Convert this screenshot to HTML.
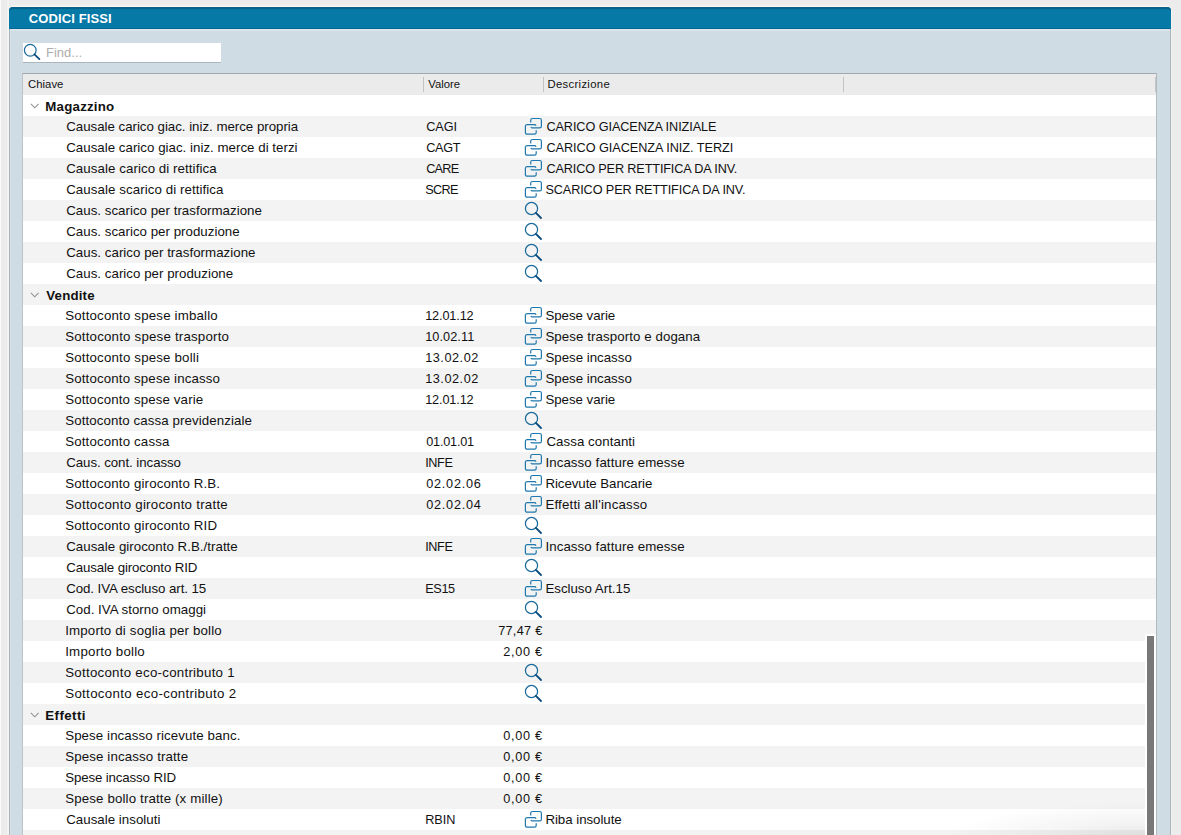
<!DOCTYPE html>
<html><head><meta charset="utf-8">
<style>
html,body{margin:0;padding:0;}
body{width:1181px;height:835px;overflow:hidden;background:#ececec;position:relative;font-family:"Liberation Sans",sans-serif;}
.t{position:absolute;white-space:nowrap;line-height:21px;}
.lite{position:absolute;left:0;top:0;width:1px;height:835px;background:#fafafa;}
.lite2{position:absolute;left:7px;top:0;width:2px;height:835px;background:#f2f2f2;}
.panel{position:absolute;left:9px;top:7px;width:1162px;height:840px;background:#d0dce3;border-radius:4px 4px 0 0;box-shadow:0 -1px 0 0.5px #fbf5f0;}
.pedge{position:absolute;left:0;top:22px;width:1px;height:820px;background:#a8b5bc;}
.pedge2{position:absolute;left:1px;top:22px;width:1px;height:820px;background:#d6e1e7;}
.pedger{position:absolute;right:0;top:22px;width:1px;height:820px;background:#a8b5bc;}
.hdr{position:absolute;left:0;top:0;width:100%;height:22px;background:#0779a7;border-radius:4px 4px 0 0;box-shadow:inset 0 2px 0 #05628b, inset 0 -1px 0 #046897;}
.hline{position:absolute;left:0;top:22px;width:100%;height:2px;background:#dce4e9;}
.search{position:absolute;left:23px;top:43px;width:198px;height:19px;background:#fff;box-shadow:0 1px 0 #aab6bd;}
.search .ic{position:absolute;left:0px;top:0px;}
.table{position:absolute;left:22px;top:73px;width:1135px;height:800px;background:#fff;border-top:1px solid #a2a9ad;border-left:1px solid #bcc4c9;border-right:1px solid #b3babe;box-sizing:border-box;overflow:hidden;}
.th{position:absolute;left:0;top:0;width:100%;height:21px;background:#ebebeb;}
.sep{position:absolute;top:3px;width:1px;height:15px;background:#c2c2c2;}
.rows{position:absolute;left:-23px;top:-74px;width:1181px;height:900px;}
.row{position:absolute;left:23px;width:1133px;height:21px;background:#fff;font-size:13.3px;color:#111;}
.row.alt{background:#f3f3f3;}
.row span{position:absolute;white-space:nowrap;line-height:21px;margin-left:-23px;}
.chev{position:absolute;left:7px;top:7.6px;}
.ib{position:absolute;left:499px;top:0;width:22px;height:21px;}
.ic{position:absolute;left:0;top:0;}
.strack{position:absolute;left:1122px;top:560px;width:11px;height:300px;background:#fff;}
.scroll{position:absolute;left:1124px;top:562px;width:7px;height:300px;background:#787878;}
.corner{position:absolute;left:900px;top:720px;width:222px;height:60px;background:radial-gradient(ellipse 200px 36px at 222px 44px, rgba(0,0,0,0.09), rgba(0,0,0,0.04) 50%, rgba(0,0,0,0) 100%);}
</style></head><body>
<div class="lite"></div><div class="lite2"></div>
<div class="panel">
  <div class="hdr"></div>
  <div class="hline"></div>
  <div class="pedge"></div><div class="pedge2"></div><div class="pedger"></div>
  <span class="t" style="left:28.70px;top:1.00px;letter-spacing:0.118px;font-size:13px;font-weight:bold;color:#fff;margin-left:-9px">CODICI FISSI</span>
</div>
<div class="search"><svg class="ic" width="22" height="21" viewBox="0 0 22 21"><circle cx="7.25" cy="7.25" r="5.85" fill="none" stroke="#1a6b9c" stroke-width="1.2"/><path d="M11.4 11.4 L16.4 16.2" stroke="#0a4a7c" stroke-width="1.7" stroke-linecap="round"/></svg><span class="t" style="left:46.00px;top:-0.80px;letter-spacing:0.000px;font-size:13px;color:#adadad;margin-left:-23px">Find...</span></div>
<div class="table">
  <div class="th">
    <span class="t" style="left:28.10px;top:-0.10px;letter-spacing:0.020px;font-size:11.3px;color:#111;margin-left:-23px">Chiave</span>
    <div class="sep" style="left:400px"></div><span class="t" style="left:428.30px;top:-0.10px;letter-spacing:0.000px;font-size:11.3px;color:#111;margin-left:-23px">Valore</span>
    <div class="sep" style="left:520px"></div><span class="t" style="left:547.40px;top:-0.10px;letter-spacing:0.330px;font-size:11.3px;color:#111;margin-left:-23px">Descrizione</span>
    <div class="sep" style="left:820px"></div>
    <div class="sep" style="left:1132px;background:#c6c6c6"></div>
  </div>
  <div class="rows">
<div class="row" style="top:95px"><svg class="chev" width="12" height="8" viewBox="0 0 12 8"><path d="M0.9 0.9 L4.75 4.75 L8.6 0.9" fill="none" stroke="#909090" stroke-width="1.05"/></svg><span style="left:45.30px;top:0.50px;letter-spacing:0.213px;font-size:13.3px;font-weight:bold;font-weight:bold">Magazzino</span></div>
<div class="row alt" style="top:116px"><span style="left:66.20px;top:0.30px;letter-spacing:-0.021px;font-size:13.3px;">Causale carico giac. iniz. merce propria</span><span style="left:426.20px;top:1.30px;letter-spacing:-0.067px;font-size:12.7px;">CAGI</span><b class="ib"><svg class="ic" width="22" height="21" viewBox="0 0 22 21"><path d="M8.7 6.45 V4.2 A1.7 1.7 0 0 1 10.4 2.5 H17.7 A1.7 1.7 0 0 1 19.4 4.2 V10.15 A1.7 1.7 0 0 1 17.7 11.85 H10.4 A1.7 1.7 0 0 1 8.85 10.9" fill="none" stroke="#1f78ad" stroke-width="1.2"/><path d="M14.2 14.2 V16.5 A1.7 1.7 0 0 1 12.5 18.2 H5.1 A1.7 1.7 0 0 1 3.4 16.5 V10.4 A1.7 1.7 0 0 1 5.1 8.7 H12.5 A1.7 1.7 0 0 1 14.05 9.65" fill="none" stroke="#1f78ad" stroke-width="1.2"/></svg></b><span style="left:546.40px;top:1.30px;letter-spacing:-0.083px;font-size:12.7px;">CARICO GIACENZA INIZIALE</span></div>
<div class="row" style="top:137px"><span style="left:66.20px;top:0.30px;letter-spacing:0.020px;font-size:13.3px;">Causale carico giac. iniz. merce di terzi</span><span style="left:426.20px;top:1.30px;letter-spacing:-0.300px;font-size:12.7px;">CAGT</span><b class="ib"><svg class="ic" width="22" height="21" viewBox="0 0 22 21"><path d="M8.7 6.45 V4.2 A1.7 1.7 0 0 1 10.4 2.5 H17.7 A1.7 1.7 0 0 1 19.4 4.2 V10.15 A1.7 1.7 0 0 1 17.7 11.85 H10.4 A1.7 1.7 0 0 1 8.85 10.9" fill="none" stroke="#1f78ad" stroke-width="1.2"/><path d="M14.2 14.2 V16.5 A1.7 1.7 0 0 1 12.5 18.2 H5.1 A1.7 1.7 0 0 1 3.4 16.5 V10.4 A1.7 1.7 0 0 1 5.1 8.7 H12.5 A1.7 1.7 0 0 1 14.05 9.65" fill="none" stroke="#1f78ad" stroke-width="1.2"/></svg></b><span style="left:546.40px;top:1.30px;letter-spacing:-0.042px;font-size:12.7px;">CARICO GIACENZA INIZ. TERZI</span></div>
<div class="row alt" style="top:158px"><span style="left:66.20px;top:0.30px;letter-spacing:0.069px;font-size:13.3px;">Causale carico di rettifica</span><span style="left:426.20px;top:1.30px;letter-spacing:-0.767px;font-size:12.7px;">CARE</span><b class="ib"><svg class="ic" width="22" height="21" viewBox="0 0 22 21"><path d="M8.7 6.45 V4.2 A1.7 1.7 0 0 1 10.4 2.5 H17.7 A1.7 1.7 0 0 1 19.4 4.2 V10.15 A1.7 1.7 0 0 1 17.7 11.85 H10.4 A1.7 1.7 0 0 1 8.85 10.9" fill="none" stroke="#1f78ad" stroke-width="1.2"/><path d="M14.2 14.2 V16.5 A1.7 1.7 0 0 1 12.5 18.2 H5.1 A1.7 1.7 0 0 1 3.4 16.5 V10.4 A1.7 1.7 0 0 1 5.1 8.7 H12.5 A1.7 1.7 0 0 1 14.05 9.65" fill="none" stroke="#1f78ad" stroke-width="1.2"/></svg></b><span style="left:546.40px;top:1.30px;letter-spacing:-0.141px;font-size:12.7px;">CARICO PER RETTIFICA DA INV.</span></div>
<div class="row" style="top:179px"><span style="left:66.20px;top:0.30px;letter-spacing:0.078px;font-size:13.3px;">Causale scarico di rettifica</span><span style="left:425.20px;top:1.30px;letter-spacing:-0.633px;font-size:12.7px;">SCRE</span><b class="ib"><svg class="ic" width="22" height="21" viewBox="0 0 22 21"><path d="M8.7 6.45 V4.2 A1.7 1.7 0 0 1 10.4 2.5 H17.7 A1.7 1.7 0 0 1 19.4 4.2 V10.15 A1.7 1.7 0 0 1 17.7 11.85 H10.4 A1.7 1.7 0 0 1 8.85 10.9" fill="none" stroke="#1f78ad" stroke-width="1.2"/><path d="M14.2 14.2 V16.5 A1.7 1.7 0 0 1 12.5 18.2 H5.1 A1.7 1.7 0 0 1 3.4 16.5 V10.4 A1.7 1.7 0 0 1 5.1 8.7 H12.5 A1.7 1.7 0 0 1 14.05 9.65" fill="none" stroke="#1f78ad" stroke-width="1.2"/></svg></b><span style="left:545.40px;top:1.30px;letter-spacing:-0.111px;font-size:12.7px;">SCARICO PER RETTIFICA DA INV.</span></div>
<div class="row alt" style="top:200px"><span style="left:66.20px;top:0.30px;letter-spacing:0.019px;font-size:13.3px;">Caus. scarico per trasformazione</span><b class="ib"><svg class="ic" width="22" height="21" viewBox="0 0 22 21"><circle cx="9.5" cy="8.5" r="6.1" fill="none" stroke="#1a6b9c" stroke-width="1.25"/><path d="M13.9 12.9 L19.0 18.0" stroke="#0a4a7c" stroke-width="1.8" stroke-linecap="round"/></svg></b></div>
<div class="row" style="top:221px"><span style="left:66.20px;top:0.30px;letter-spacing:0.019px;font-size:13.3px;">Caus. scarico per produzione</span><b class="ib"><svg class="ic" width="22" height="21" viewBox="0 0 22 21"><circle cx="9.5" cy="8.5" r="6.1" fill="none" stroke="#1a6b9c" stroke-width="1.25"/><path d="M13.9 12.9 L19.0 18.0" stroke="#0a4a7c" stroke-width="1.8" stroke-linecap="round"/></svg></b></div>
<div class="row alt" style="top:242px"><span style="left:66.20px;top:0.30px;letter-spacing:0.027px;font-size:13.3px;">Caus. carico per trasformazione</span><b class="ib"><svg class="ic" width="22" height="21" viewBox="0 0 22 21"><circle cx="9.5" cy="8.5" r="6.1" fill="none" stroke="#1a6b9c" stroke-width="1.25"/><path d="M13.9 12.9 L19.0 18.0" stroke="#0a4a7c" stroke-width="1.8" stroke-linecap="round"/></svg></b></div>
<div class="row" style="top:263px"><span style="left:66.20px;top:0.30px;letter-spacing:0.027px;font-size:13.3px;">Caus. carico per produzione</span><b class="ib"><svg class="ic" width="22" height="21" viewBox="0 0 22 21"><circle cx="9.5" cy="8.5" r="6.1" fill="none" stroke="#1a6b9c" stroke-width="1.25"/><path d="M13.9 12.9 L19.0 18.0" stroke="#0a4a7c" stroke-width="1.8" stroke-linecap="round"/></svg></b></div>
<div class="row alt" style="top:284px"><svg class="chev" width="12" height="8" viewBox="0 0 12 8"><path d="M0.9 0.9 L4.75 4.75 L8.6 0.9" fill="none" stroke="#909090" stroke-width="1.05"/></svg><span style="left:46.30px;top:0.50px;letter-spacing:0.167px;font-size:13.3px;font-weight:bold;font-weight:bold">Vendite</span></div>
<div class="row" style="top:305px"><span style="left:65.20px;top:0.30px;letter-spacing:0.174px;font-size:13.3px;">Sottoconto spese imballo</span><span style="left:425.20px;top:1.30px;letter-spacing:-0.129px;font-size:12.7px;">12.01.12</span><b class="ib"><svg class="ic" width="22" height="21" viewBox="0 0 22 21"><path d="M8.7 6.45 V4.2 A1.7 1.7 0 0 1 10.4 2.5 H17.7 A1.7 1.7 0 0 1 19.4 4.2 V10.15 A1.7 1.7 0 0 1 17.7 11.85 H10.4 A1.7 1.7 0 0 1 8.85 10.9" fill="none" stroke="#1f78ad" stroke-width="1.2"/><path d="M14.2 14.2 V16.5 A1.7 1.7 0 0 1 12.5 18.2 H5.1 A1.7 1.7 0 0 1 3.4 16.5 V10.4 A1.7 1.7 0 0 1 5.1 8.7 H12.5 A1.7 1.7 0 0 1 14.05 9.65" fill="none" stroke="#1f78ad" stroke-width="1.2"/></svg></b><span style="left:545.40px;top:0.30px;letter-spacing:-0.040px;font-size:13.3px;">Spese varie</span></div>
<div class="row alt" style="top:326px"><span style="left:65.20px;top:0.30px;letter-spacing:0.192px;font-size:13.3px;">Sottoconto spese trasporto</span><span style="left:425.20px;top:1.30px;letter-spacing:0.086px;font-size:12.7px;">10.02.11</span><b class="ib"><svg class="ic" width="22" height="21" viewBox="0 0 22 21"><path d="M8.7 6.45 V4.2 A1.7 1.7 0 0 1 10.4 2.5 H17.7 A1.7 1.7 0 0 1 19.4 4.2 V10.15 A1.7 1.7 0 0 1 17.7 11.85 H10.4 A1.7 1.7 0 0 1 8.85 10.9" fill="none" stroke="#1f78ad" stroke-width="1.2"/><path d="M14.2 14.2 V16.5 A1.7 1.7 0 0 1 12.5 18.2 H5.1 A1.7 1.7 0 0 1 3.4 16.5 V10.4 A1.7 1.7 0 0 1 5.1 8.7 H12.5 A1.7 1.7 0 0 1 14.05 9.65" fill="none" stroke="#1f78ad" stroke-width="1.2"/></svg></b><span style="left:545.40px;top:0.30px;letter-spacing:0.078px;font-size:13.3px;">Spese trasporto e dogana</span></div>
<div class="row" style="top:347px"><span style="left:65.20px;top:0.30px;letter-spacing:0.171px;font-size:13.3px;">Sottoconto spese bolli</span><span style="left:425.20px;top:1.30px;letter-spacing:0.529px;font-size:12.7px;">13.02.02</span><b class="ib"><svg class="ic" width="22" height="21" viewBox="0 0 22 21"><path d="M8.7 6.45 V4.2 A1.7 1.7 0 0 1 10.4 2.5 H17.7 A1.7 1.7 0 0 1 19.4 4.2 V10.15 A1.7 1.7 0 0 1 17.7 11.85 H10.4 A1.7 1.7 0 0 1 8.85 10.9" fill="none" stroke="#1f78ad" stroke-width="1.2"/><path d="M14.2 14.2 V16.5 A1.7 1.7 0 0 1 12.5 18.2 H5.1 A1.7 1.7 0 0 1 3.4 16.5 V10.4 A1.7 1.7 0 0 1 5.1 8.7 H12.5 A1.7 1.7 0 0 1 14.05 9.65" fill="none" stroke="#1f78ad" stroke-width="1.2"/></svg></b><span style="left:545.40px;top:0.30px;letter-spacing:-0.008px;font-size:13.3px;">Spese incasso</span></div>
<div class="row alt" style="top:368px"><span style="left:65.20px;top:0.30px;letter-spacing:0.143px;font-size:13.3px;">Sottoconto spese incasso</span><span style="left:425.20px;top:1.30px;letter-spacing:0.529px;font-size:12.7px;">13.02.02</span><b class="ib"><svg class="ic" width="22" height="21" viewBox="0 0 22 21"><path d="M8.7 6.45 V4.2 A1.7 1.7 0 0 1 10.4 2.5 H17.7 A1.7 1.7 0 0 1 19.4 4.2 V10.15 A1.7 1.7 0 0 1 17.7 11.85 H10.4 A1.7 1.7 0 0 1 8.85 10.9" fill="none" stroke="#1f78ad" stroke-width="1.2"/><path d="M14.2 14.2 V16.5 A1.7 1.7 0 0 1 12.5 18.2 H5.1 A1.7 1.7 0 0 1 3.4 16.5 V10.4 A1.7 1.7 0 0 1 5.1 8.7 H12.5 A1.7 1.7 0 0 1 14.05 9.65" fill="none" stroke="#1f78ad" stroke-width="1.2"/></svg></b><span style="left:545.40px;top:0.30px;letter-spacing:-0.008px;font-size:13.3px;">Spese incasso</span></div>
<div class="row" style="top:389px"><span style="left:65.20px;top:0.30px;letter-spacing:0.129px;font-size:13.3px;">Sottoconto spese varie</span><span style="left:425.20px;top:1.30px;letter-spacing:-0.129px;font-size:12.7px;">12.01.12</span><b class="ib"><svg class="ic" width="22" height="21" viewBox="0 0 22 21"><path d="M8.7 6.45 V4.2 A1.7 1.7 0 0 1 10.4 2.5 H17.7 A1.7 1.7 0 0 1 19.4 4.2 V10.15 A1.7 1.7 0 0 1 17.7 11.85 H10.4 A1.7 1.7 0 0 1 8.85 10.9" fill="none" stroke="#1f78ad" stroke-width="1.2"/><path d="M14.2 14.2 V16.5 A1.7 1.7 0 0 1 12.5 18.2 H5.1 A1.7 1.7 0 0 1 3.4 16.5 V10.4 A1.7 1.7 0 0 1 5.1 8.7 H12.5 A1.7 1.7 0 0 1 14.05 9.65" fill="none" stroke="#1f78ad" stroke-width="1.2"/></svg></b><span style="left:545.40px;top:0.30px;letter-spacing:-0.040px;font-size:13.3px;">Spese varie</span></div>
<div class="row alt" style="top:410px"><span style="left:65.20px;top:0.30px;letter-spacing:0.093px;font-size:13.3px;">Sottoconto cassa previdenziale</span><b class="ib"><svg class="ic" width="22" height="21" viewBox="0 0 22 21"><circle cx="9.5" cy="8.5" r="6.1" fill="none" stroke="#1a6b9c" stroke-width="1.25"/><path d="M13.9 12.9 L19.0 18.0" stroke="#0a4a7c" stroke-width="1.8" stroke-linecap="round"/></svg></b></div>
<div class="row" style="top:431px"><span style="left:65.20px;top:0.30px;letter-spacing:0.147px;font-size:13.3px;">Sottoconto cassa</span><span style="left:426.20px;top:1.30px;letter-spacing:-0.200px;font-size:12.7px;">01.01.01</span><b class="ib"><svg class="ic" width="22" height="21" viewBox="0 0 22 21"><path d="M8.7 6.45 V4.2 A1.7 1.7 0 0 1 10.4 2.5 H17.7 A1.7 1.7 0 0 1 19.4 4.2 V10.15 A1.7 1.7 0 0 1 17.7 11.85 H10.4 A1.7 1.7 0 0 1 8.85 10.9" fill="none" stroke="#1f78ad" stroke-width="1.2"/><path d="M14.2 14.2 V16.5 A1.7 1.7 0 0 1 12.5 18.2 H5.1 A1.7 1.7 0 0 1 3.4 16.5 V10.4 A1.7 1.7 0 0 1 5.1 8.7 H12.5 A1.7 1.7 0 0 1 14.05 9.65" fill="none" stroke="#1f78ad" stroke-width="1.2"/></svg></b><span style="left:546.40px;top:0.30px;letter-spacing:0.054px;font-size:13.3px;">Cassa contanti</span></div>
<div class="row alt" style="top:452px"><span style="left:66.20px;top:0.30px;letter-spacing:-0.067px;font-size:13.3px;">Caus. cont. incasso</span><span style="left:425.20px;top:1.30px;letter-spacing:-0.400px;font-size:12.7px;">INFE</span><b class="ib"><svg class="ic" width="22" height="21" viewBox="0 0 22 21"><path d="M8.7 6.45 V4.2 A1.7 1.7 0 0 1 10.4 2.5 H17.7 A1.7 1.7 0 0 1 19.4 4.2 V10.15 A1.7 1.7 0 0 1 17.7 11.85 H10.4 A1.7 1.7 0 0 1 8.85 10.9" fill="none" stroke="#1f78ad" stroke-width="1.2"/><path d="M14.2 14.2 V16.5 A1.7 1.7 0 0 1 12.5 18.2 H5.1 A1.7 1.7 0 0 1 3.4 16.5 V10.4 A1.7 1.7 0 0 1 5.1 8.7 H12.5 A1.7 1.7 0 0 1 14.05 9.65" fill="none" stroke="#1f78ad" stroke-width="1.2"/></svg></b><span style="left:545.40px;top:0.30px;letter-spacing:0.086px;font-size:13.3px;">Incasso fatture emesse</span></div>
<div class="row" style="top:473px"><span style="left:65.20px;top:0.30px;letter-spacing:0.138px;font-size:13.3px;">Sottoconto giroconto R.B.</span><span style="left:426.20px;top:1.30px;letter-spacing:0.757px;font-size:12.7px;">02.02.06</span><b class="ib"><svg class="ic" width="22" height="21" viewBox="0 0 22 21"><path d="M8.7 6.45 V4.2 A1.7 1.7 0 0 1 10.4 2.5 H17.7 A1.7 1.7 0 0 1 19.4 4.2 V10.15 A1.7 1.7 0 0 1 17.7 11.85 H10.4 A1.7 1.7 0 0 1 8.85 10.9" fill="none" stroke="#1f78ad" stroke-width="1.2"/><path d="M14.2 14.2 V16.5 A1.7 1.7 0 0 1 12.5 18.2 H5.1 A1.7 1.7 0 0 1 3.4 16.5 V10.4 A1.7 1.7 0 0 1 5.1 8.7 H12.5 A1.7 1.7 0 0 1 14.05 9.65" fill="none" stroke="#1f78ad" stroke-width="1.2"/></svg></b><span style="left:545.40px;top:0.30px;letter-spacing:-0.062px;font-size:13.3px;">Ricevute Bancarie</span></div>
<div class="row alt" style="top:494px"><span style="left:65.20px;top:0.30px;letter-spacing:0.254px;font-size:13.3px;">Sottoconto giroconto tratte</span><span style="left:426.20px;top:1.30px;letter-spacing:0.757px;font-size:12.7px;">02.02.04</span><b class="ib"><svg class="ic" width="22" height="21" viewBox="0 0 22 21"><path d="M8.7 6.45 V4.2 A1.7 1.7 0 0 1 10.4 2.5 H17.7 A1.7 1.7 0 0 1 19.4 4.2 V10.15 A1.7 1.7 0 0 1 17.7 11.85 H10.4 A1.7 1.7 0 0 1 8.85 10.9" fill="none" stroke="#1f78ad" stroke-width="1.2"/><path d="M14.2 14.2 V16.5 A1.7 1.7 0 0 1 12.5 18.2 H5.1 A1.7 1.7 0 0 1 3.4 16.5 V10.4 A1.7 1.7 0 0 1 5.1 8.7 H12.5 A1.7 1.7 0 0 1 14.05 9.65" fill="none" stroke="#1f78ad" stroke-width="1.2"/></svg></b><span style="left:545.40px;top:0.30px;letter-spacing:0.189px;font-size:13.3px;">Effetti all&#39;incasso</span></div>
<div class="row" style="top:515px"><span style="left:65.20px;top:0.30px;letter-spacing:0.143px;font-size:13.3px;">Sottoconto giroconto RID</span><b class="ib"><svg class="ic" width="22" height="21" viewBox="0 0 22 21"><circle cx="9.5" cy="8.5" r="6.1" fill="none" stroke="#1a6b9c" stroke-width="1.25"/><path d="M13.9 12.9 L19.0 18.0" stroke="#0a4a7c" stroke-width="1.8" stroke-linecap="round"/></svg></b></div>
<div class="row alt" style="top:536px"><span style="left:66.20px;top:0.30px;letter-spacing:0.029px;font-size:13.3px;">Causale giroconto R.B./tratte</span><span style="left:425.20px;top:1.30px;letter-spacing:-0.400px;font-size:12.7px;">INFE</span><b class="ib"><svg class="ic" width="22" height="21" viewBox="0 0 22 21"><path d="M8.7 6.45 V4.2 A1.7 1.7 0 0 1 10.4 2.5 H17.7 A1.7 1.7 0 0 1 19.4 4.2 V10.15 A1.7 1.7 0 0 1 17.7 11.85 H10.4 A1.7 1.7 0 0 1 8.85 10.9" fill="none" stroke="#1f78ad" stroke-width="1.2"/><path d="M14.2 14.2 V16.5 A1.7 1.7 0 0 1 12.5 18.2 H5.1 A1.7 1.7 0 0 1 3.4 16.5 V10.4 A1.7 1.7 0 0 1 5.1 8.7 H12.5 A1.7 1.7 0 0 1 14.05 9.65" fill="none" stroke="#1f78ad" stroke-width="1.2"/></svg></b><span style="left:545.40px;top:0.30px;letter-spacing:0.086px;font-size:13.3px;">Incasso fatture emesse</span></div>
<div class="row" style="top:557px"><span style="left:66.20px;top:0.30px;letter-spacing:-0.130px;font-size:13.3px;">Causale giroconto RID</span><b class="ib"><svg class="ic" width="22" height="21" viewBox="0 0 22 21"><circle cx="9.5" cy="8.5" r="6.1" fill="none" stroke="#1a6b9c" stroke-width="1.25"/><path d="M13.9 12.9 L19.0 18.0" stroke="#0a4a7c" stroke-width="1.8" stroke-linecap="round"/></svg></b></div>
<div class="row alt" style="top:578px"><span style="left:66.20px;top:0.30px;letter-spacing:-0.070px;font-size:13.3px;">Cod. IVA escluso art. 15</span><span style="left:425.20px;top:1.30px;letter-spacing:-0.367px;font-size:12.7px;">ES15</span><b class="ib"><svg class="ic" width="22" height="21" viewBox="0 0 22 21"><path d="M8.7 6.45 V4.2 A1.7 1.7 0 0 1 10.4 2.5 H17.7 A1.7 1.7 0 0 1 19.4 4.2 V10.15 A1.7 1.7 0 0 1 17.7 11.85 H10.4 A1.7 1.7 0 0 1 8.85 10.9" fill="none" stroke="#1f78ad" stroke-width="1.2"/><path d="M14.2 14.2 V16.5 A1.7 1.7 0 0 1 12.5 18.2 H5.1 A1.7 1.7 0 0 1 3.4 16.5 V10.4 A1.7 1.7 0 0 1 5.1 8.7 H12.5 A1.7 1.7 0 0 1 14.05 9.65" fill="none" stroke="#1f78ad" stroke-width="1.2"/></svg></b><span style="left:545.40px;top:0.30px;letter-spacing:-0.008px;font-size:13.3px;">Escluso Art.15</span></div>
<div class="row" style="top:599px"><span style="left:66.20px;top:0.30px;letter-spacing:0.019px;font-size:13.3px;">Cod. IVA storno omaggi</span><b class="ib"><svg class="ic" width="22" height="21" viewBox="0 0 22 21"><circle cx="9.5" cy="8.5" r="6.1" fill="none" stroke="#1a6b9c" stroke-width="1.25"/><path d="M13.9 12.9 L19.0 18.0" stroke="#0a4a7c" stroke-width="1.8" stroke-linecap="round"/></svg></b></div>
<div class="row alt" style="top:620px"><span style="left:65.20px;top:0.30px;letter-spacing:0.165px;font-size:13.3px;">Importo di soglia per bollo</span><span style="left:498.20px;top:1.30px;letter-spacing:0.283px;font-size:12.7px;">77,47 €</span></div>
<div class="row" style="top:641px"><span style="left:65.20px;top:0.30px;letter-spacing:0.225px;font-size:13.3px;">Importo bollo</span><span style="left:503.30px;top:1.30px;letter-spacing:0.720px;font-size:12.7px;">2,00 €</span></div>
<div class="row alt" style="top:662px"><span style="left:65.20px;top:0.30px;letter-spacing:0.262px;font-size:13.3px;">Sottoconto eco-contributo 1</span><b class="ib"><svg class="ic" width="22" height="21" viewBox="0 0 22 21"><circle cx="9.5" cy="8.5" r="6.1" fill="none" stroke="#1a6b9c" stroke-width="1.25"/><path d="M13.9 12.9 L19.0 18.0" stroke="#0a4a7c" stroke-width="1.8" stroke-linecap="round"/></svg></b></div>
<div class="row" style="top:683px"><span style="left:65.20px;top:0.30px;letter-spacing:0.323px;font-size:13.3px;">Sottoconto eco-contributo 2</span><b class="ib"><svg class="ic" width="22" height="21" viewBox="0 0 22 21"><circle cx="9.5" cy="8.5" r="6.1" fill="none" stroke="#1a6b9c" stroke-width="1.25"/><path d="M13.9 12.9 L19.0 18.0" stroke="#0a4a7c" stroke-width="1.8" stroke-linecap="round"/></svg></b></div>
<div class="row alt" style="top:704px"><svg class="chev" width="12" height="8" viewBox="0 0 12 8"><path d="M0.9 0.9 L4.75 4.75 L8.6 0.9" fill="none" stroke="#909090" stroke-width="1.05"/></svg><span style="left:45.30px;top:0.50px;letter-spacing:0.417px;font-size:13.3px;font-weight:bold;font-weight:bold">Effetti</span></div>
<div class="row" style="top:725px"><span style="left:65.20px;top:0.30px;letter-spacing:0.085px;font-size:13.3px;">Spese incasso ricevute banc.</span><span style="left:503.30px;top:1.30px;letter-spacing:0.720px;font-size:12.7px;">0,00 €</span></div>
<div class="row alt" style="top:746px"><span style="left:65.20px;top:0.30px;letter-spacing:0.126px;font-size:13.3px;">Spese incasso tratte</span><span style="left:503.30px;top:1.30px;letter-spacing:0.720px;font-size:12.7px;">0,00 €</span></div>
<div class="row" style="top:767px"><span style="left:65.20px;top:0.30px;letter-spacing:-0.138px;font-size:13.3px;">Spese incasso RID</span><span style="left:503.30px;top:1.30px;letter-spacing:0.720px;font-size:12.7px;">0,00 €</span></div>
<div class="row alt" style="top:788px"><span style="left:65.20px;top:0.30px;letter-spacing:0.141px;font-size:13.3px;">Spese bollo tratte (x mille)</span><span style="left:503.30px;top:1.30px;letter-spacing:0.720px;font-size:12.7px;">0,00 €</span></div>
<div class="row" style="top:809px"><span style="left:66.20px;top:0.30px;letter-spacing:0.020px;font-size:13.3px;">Causale insoluti</span><span style="left:425.20px;top:1.30px;letter-spacing:-0.033px;font-size:12.7px;">RBIN</span><b class="ib"><svg class="ic" width="22" height="21" viewBox="0 0 22 21"><path d="M8.7 6.45 V4.2 A1.7 1.7 0 0 1 10.4 2.5 H17.7 A1.7 1.7 0 0 1 19.4 4.2 V10.15 A1.7 1.7 0 0 1 17.7 11.85 H10.4 A1.7 1.7 0 0 1 8.85 10.9" fill="none" stroke="#1f78ad" stroke-width="1.2"/><path d="M14.2 14.2 V16.5 A1.7 1.7 0 0 1 12.5 18.2 H5.1 A1.7 1.7 0 0 1 3.4 16.5 V10.4 A1.7 1.7 0 0 1 5.1 8.7 H12.5 A1.7 1.7 0 0 1 14.05 9.65" fill="none" stroke="#1f78ad" stroke-width="1.2"/></svg></b><span style="left:545.40px;top:0.30px;letter-spacing:-0.042px;font-size:13.3px;">Riba insolute</span></div>
<div class="row alt" style="top:830px"></div>
  </div>
  <div class="strack"></div><div class="scroll"></div><div class="corner"></div>
</div>
</body></html>
